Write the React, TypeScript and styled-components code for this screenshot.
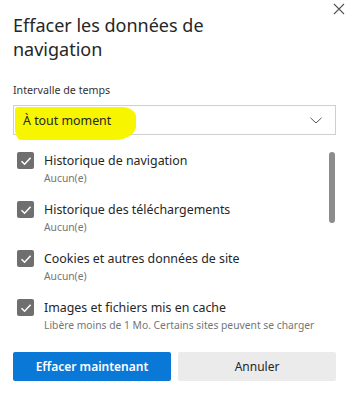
import styled, { createGlobalStyle } from "styled-components";

const GlobalStyle = createGlobalStyle`
  html, body {
    margin: 0;
    padding: 0;
    background: #ffffff;
  }
  body {
    font-family: "Noto Sans", "Open Sans", sans-serif;
    color: #262626;
  }
`;

interface ClearItem {
  label: string;
  detail: string;
}

const items: ClearItem[] = [
  {label: "Historique de navigation", detail: "Aucun(e)"},
  {label: "Historique des téléchargements", detail: "Aucun(e)"},
  {label: "Cookies et autres données de site", detail: "Aucun(e)"},
  {label: "Images et fichiers mis en cache", detail: "Libère moins de 1 Mo. Certains sites peuvent se charger"},
];

function Check() {
  return (
    <svg width="12" height="12" viewBox="0 0 12 12">
      <path d="M1.5 6.3 L4.6 9.3 L10.6 2.8" fill="none" stroke="#ffffff" strokeWidth="1.5" />
    </svg>
  );
}

function App() {
  return (
    <>
      <GlobalStyle />
      <StyledDialog>
        <div className="header">
          <h2>
            Effacer les données de navigation
          </h2>
          <CloseButton aria-label="Fermer">
            <svg width="12" height="12" viewBox="0 0 12 12">
              <path d="M1 1 L11 11 M11 1 L1 11" stroke="#555" strokeWidth="1.1" />
            </svg>
          </CloseButton>
        </div>
        <FieldLabel>Intervalle de temps</FieldLabel>
        <SelectBox>
          <Highlight />
          <span className="value">À tout moment</span>
          <svg width="12" height="7" viewBox="0 0 12 7">
            <path d="M0.5 0.8 L6 6 L11.5 0.8" fill="none" stroke="#555" strokeWidth="1" />
          </svg>
        </SelectBox>
        <ListArea>
          <ItemList>
            {items.map((item) => (
              <Row key={item.label}>
                <CheckBox>
                  <Check />
                </CheckBox>
                <div className="texts">
                  <span className="label">{item.label}</span>
                  <span className="detail">{item.detail}</span>
                </div>
              </Row>
            ))}
          </ItemList>
          <ScrollTrack>
            <div className="thumb" />
          </ScrollTrack>
        </ListArea>
        <Actions>
          <ActionButton $primary>Effacer maintenant</ActionButton>
          <ActionButton>Annuler</ActionButton>
        </Actions>
      </StyledDialog>
    </>
  );
}

export default App;

const StyledDialog = styled.div`
  width: 352px;
  height: 400px;
  box-sizing: border-box;
  padding: 0 16px 0 13px;
  display: flex;
  flex-direction: column;

  .header {
    display: flex;
    align-items: flex-start;
    justify-content: space-between;
  }

  h2 {
    margin: 0;
    padding-top: 13px;
    width: 240px;
    font-size: 18px;
    line-height: 24px;
    font-weight: 400;
    color: #262626;
  }
`;

const CloseButton = styled.button`
  border: none;
  background: none;
  padding: 0;
  margin: 2px -10px 0 0;
  width: 14px;
  height: 14px;
  display: flex;
  align-items: center;
  justify-content: center;
`;

const FieldLabel = styled.div`
  margin-top: 22px;
  font-size: 10.7px;
  line-height: 14px;
  color: #333;
`;

const SelectBox = styled.div`
  position: relative;
  margin-top: 8px;
  height: 30px;
  box-sizing: border-box;
  border: 1px solid #cfcfcf;
  display: flex;
  align-items: center;
  justify-content: space-between;
  padding: 0 13px 0 9px;

  .value {
    position: relative;
    font-size: 12.4px;
    color: #262626;
  }
`;

const Highlight = styled.div`
  position: absolute;
  left: 1px;
  top: 1px;
  width: 121px;
  height: 33px;
  background: #f7f500;
  border-radius: 3px 14px 22px 6px / 3px 10px 14px 12px;
`;

const ListArea = styled.div`
  margin-top: 17px;
  display: flex;
  justify-content: space-between;
  height: 183px;
  overflow: hidden;
`;

const ItemList = styled.div`
  display: flex;
  flex-direction: column;
  gap: 14px;
  padding-left: 4px;
`;

const Row = styled.div`
  display: flex;
  gap: 10px;
  align-items: flex-start;

  .texts {
    display: flex;
    flex-direction: column;
  }

  .label {
    font-size: 12.4px;
    line-height: 18px;
    color: #262626;
    white-space: nowrap;
  }

  .detail {
    font-size: 10.3px;
    line-height: 17px;
    color: #767676;
    white-space: nowrap;
  }
`;

const CheckBox = styled.div`
  width: 17px;
  height: 17px;
  border-radius: 2px;
  background: #6f6f6f;
  display: flex;
  align-items: center;
  justify-content: center;
`;

const ScrollTrack = styled.div`
  width: 7px;

  .thumb {
    width: 6px;
    height: 71px;
    border-radius: 3px;
    background: #8c8c8c;
  }
`;

const Actions = styled.div`
  margin-top: 17px;
  display: grid;
  grid-template-columns: 1fr 1fr;
  gap: 7px;
`;

const ActionButton = styled.button<{ $primary?: boolean }>`
  height: 29px;
  border: none;
  border-radius: 2px;
  font-family: "Noto Sans", "Open Sans", sans-serif;
  font-size: 12px;
  font-weight: ${(p) => (p.$primary ? 600 : 400)};
  background: ${(p) => (p.$primary ? "#0a78d7" : "#ebebeb")};
  color: ${(p) => (p.$primary ? "#ffffff" : "#262626")};
`;
